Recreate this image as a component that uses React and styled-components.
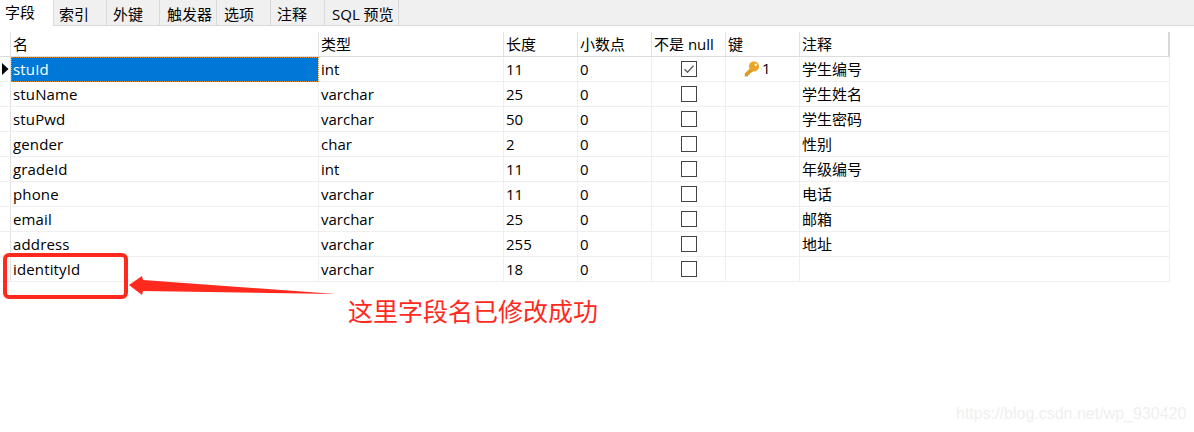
import React from "react";
import styled, { createGlobalStyle } from "styled-components";

const Global = createGlobalStyle`
  html, body { margin: 0; padding: 0; background: #fff; }
  body { font-family: "Open Sans", "Noto Sans CJK SC", sans-serif; overflow: hidden; }
`;

const Page = styled.div`
  position: relative;
  width: 1194px;
  height: 432px;
  overflow: hidden;
  background: #fff;
  color: #000;
  font-size: 15px;
`;

const TabBar = styled.div`
  display: flex;
  height: 25px;
  background: #f0f0f0;
  border-bottom: 1px solid #dadada;
`;

const Tab = styled.div`
  box-sizing: border-box;
  width: ${(p) => p.$w}px;
  height: ${(p) => (p.$active ? 26 : 25)}px;
  background: ${(p) => (p.$active ? "#fff" : "#f0f0f0")};
  border-right: 1px solid #d9d9d9;
  padding-left: ${(p) => p.$pad}px;
  padding-top: ${(p) => (p.$active ? 0 : 2)}px;
  line-height: 24px;
  white-space: nowrap;
  font-size: 15px;
`;

const Grid = styled.div`
  margin-top: 6px;
  width: 1170px;
`;

const Row = styled.div`
  display: grid;
  grid-template-columns: 11px 308px 185px 74px 74px 74px 74px 370px;
  height: 25px;
  box-sizing: border-box;
  border-bottom: ${(p) => (p.$head ? "1px solid #dcdcdc" : "1px solid #efefef")};
`;

const Gutter = styled.div`
  border-right: 1px solid #e2e2e2;
  display: flex;
  align-items: center;
  padding-left: 2px;
`;

const Cell = styled.div`
  box-sizing: border-box;
  border-right: 1px solid ${(p) => (p.$head ? "#e2e2e2" : "#efefef")};
  padding-left: 2px;
  line-height: 24px;
  white-space: nowrap;
  overflow: hidden;
  ${(p) => p.$last && p.$head && "border-right: 2px solid #d8d8d8;"}
`;

const NameCell = styled(Cell)`
  letter-spacing: 0.15px;
  ${(p) =>
    p.$selected &&
    `background:#0078d7;color:#fff;outline:1px dotted #d98a35;outline-offset:-1px;margin-bottom:-1px;`}
`;

const CheckCell = styled(Cell)`
  display: flex;
  justify-content: center;
  align-items: center;
  padding: 0 0 1px;
`;

const Box = styled.div`
  box-sizing: border-box;
  width: 16px;
  height: 16px;
  border: 1px solid #444;
  display: flex;
  align-items: center;
  justify-content: center;
`;

const KeyCell = styled(Cell)`
  display: flex;
  align-items: center;
  padding-left: 18px;
  gap: 2px;
`;

const KeyNum = styled.span`
  position: relative;
  top: -1px;
`;

const CommentText = styled.span`
  font-size: 15px;
`;

const RedBox = styled.div`
  position: absolute;
  left: 3px;
  top: 253px;
  width: 117px;
  height: 38px;
  border: 4px solid #ff2a1d;
  border-radius: 6px;
`;

const ArrowSvg = styled.svg`
  position: absolute;
  left: 125px;
  top: 272px;
`;

const Note = styled.div`
  position: absolute;
  left: 348px;
  top: 293px;
  font-size: 25px;
  line-height: 34px;
  color: #ff2a1d;
  font-family: "Noto Sans CJK SC", sans-serif;
  white-space: nowrap;
`;

const Watermark = styled.div`
  position: absolute;
  left: 956px;
  top: 403px;
  font-family: "Liberation Sans", sans-serif;
  font-size: 16px;
  line-height: 22px;
  color: #efefef;
  white-space: nowrap;
`;

const tabs = [
  ["字段", 54, 5, true],
  ["索引", 53, 5],
  ["外键", 53, 6],
  ["触发器", 57, 7],
  ["选项", 54, 7],
  ["注释", 54, 6],
  ["SQL 预览", 74, 7],
];

const rows = [
  ["stuId", "int", "11", "0", true, true, "学生编号"],
  ["stuName", "varchar", "25", "0", false, false, "学生姓名"],
  ["stuPwd", "varchar", "50", "0", false, false, "学生密码"],
  ["gender", "char", "2", "0", false, false, "性别"],
  ["gradeId", "int", "11", "0", false, false, "年级编号"],
  ["phone", "varchar", "11", "0", false, false, "电话"],
  ["email", "varchar", "25", "0", false, false, "邮箱"],
  ["address", "varchar", "255", "0", false, false, "地址"],
  ["identityId", "varchar", "18", "0", false, false, ""],
];

const Key = () => (
  <svg width="16" height="16" viewBox="0 0 16 16">
    <path d="M7 6.5 0.8 12.6v2.9h3l.5-1.7 1.5-.3.3-1.5 1.6-.4 2.2-2.2z" fill="#dd9a1f" />
    <circle cx="10" cy="5.4" r="5" fill="#eaa522" />
    <circle cx="11.8" cy="3.8" r="1.3" fill="#fff4d8" />
  </svg>
);

export default function App() {
  return (
    <Page>
      <Global />
      <TabBar>
        {tabs.map(([t, w, pad, a]) => (
          <Tab key={t} $w={w} $pad={pad} $active={a}>{t}</Tab>
        ))}
      </TabBar>
      <Grid>
        <Row $head>
          <Gutter />
          {["名", "类型", "长度", "小数点", "不是 null", "键"].map((h) => (
            <Cell $head key={h}>{h}</Cell>
          ))}
          <Cell $head $last>注释</Cell>
        </Row>
        {rows.map((r, i) => (
          <Row key={r[0]}>
            <Gutter>
              {i === 0 && (
                <svg width="7" height="12" viewBox="0 0 7 12"><path d="M0 0l6.5 6L0 12z" fill="#000" /></svg>
              )}
            </Gutter>
            <NameCell $selected={i === 0}>{r[0]}</NameCell>
            <Cell>{r[1]}</Cell>
            <Cell>{r[2]}</Cell>
            <Cell>{r[3]}</Cell>
            <CheckCell>
              <Box>
                {r[4] && (
                  <svg width="12" height="12" viewBox="0 0 12 12">
                    <path d="M1.5 6.2 4.5 9.2 10.5 2.8" fill="none" stroke="#666" strokeWidth="1.5" />
                  </svg>
                )}
              </Box>
            </CheckCell>
            <KeyCell>
              {r[5] && (<><Key /><KeyNum>1</KeyNum></>)}
            </KeyCell>
            <Cell><CommentText>{r[6]}</CommentText></Cell>
          </Row>
        ))}
      </Grid>
      <RedBox />
      <ArrowSvg width="214" height="26" viewBox="0 0 214 26">
        <path d="M4 13 17 4 18 8 211 22 18 19 17 23z" fill="#ff2a1d" />
      </ArrowSvg>
      <Note>这里字段名已修改成功</Note>
      <Watermark>https://blog.csdn.net/wp_930420</Watermark>
    </Page>
  );
}
